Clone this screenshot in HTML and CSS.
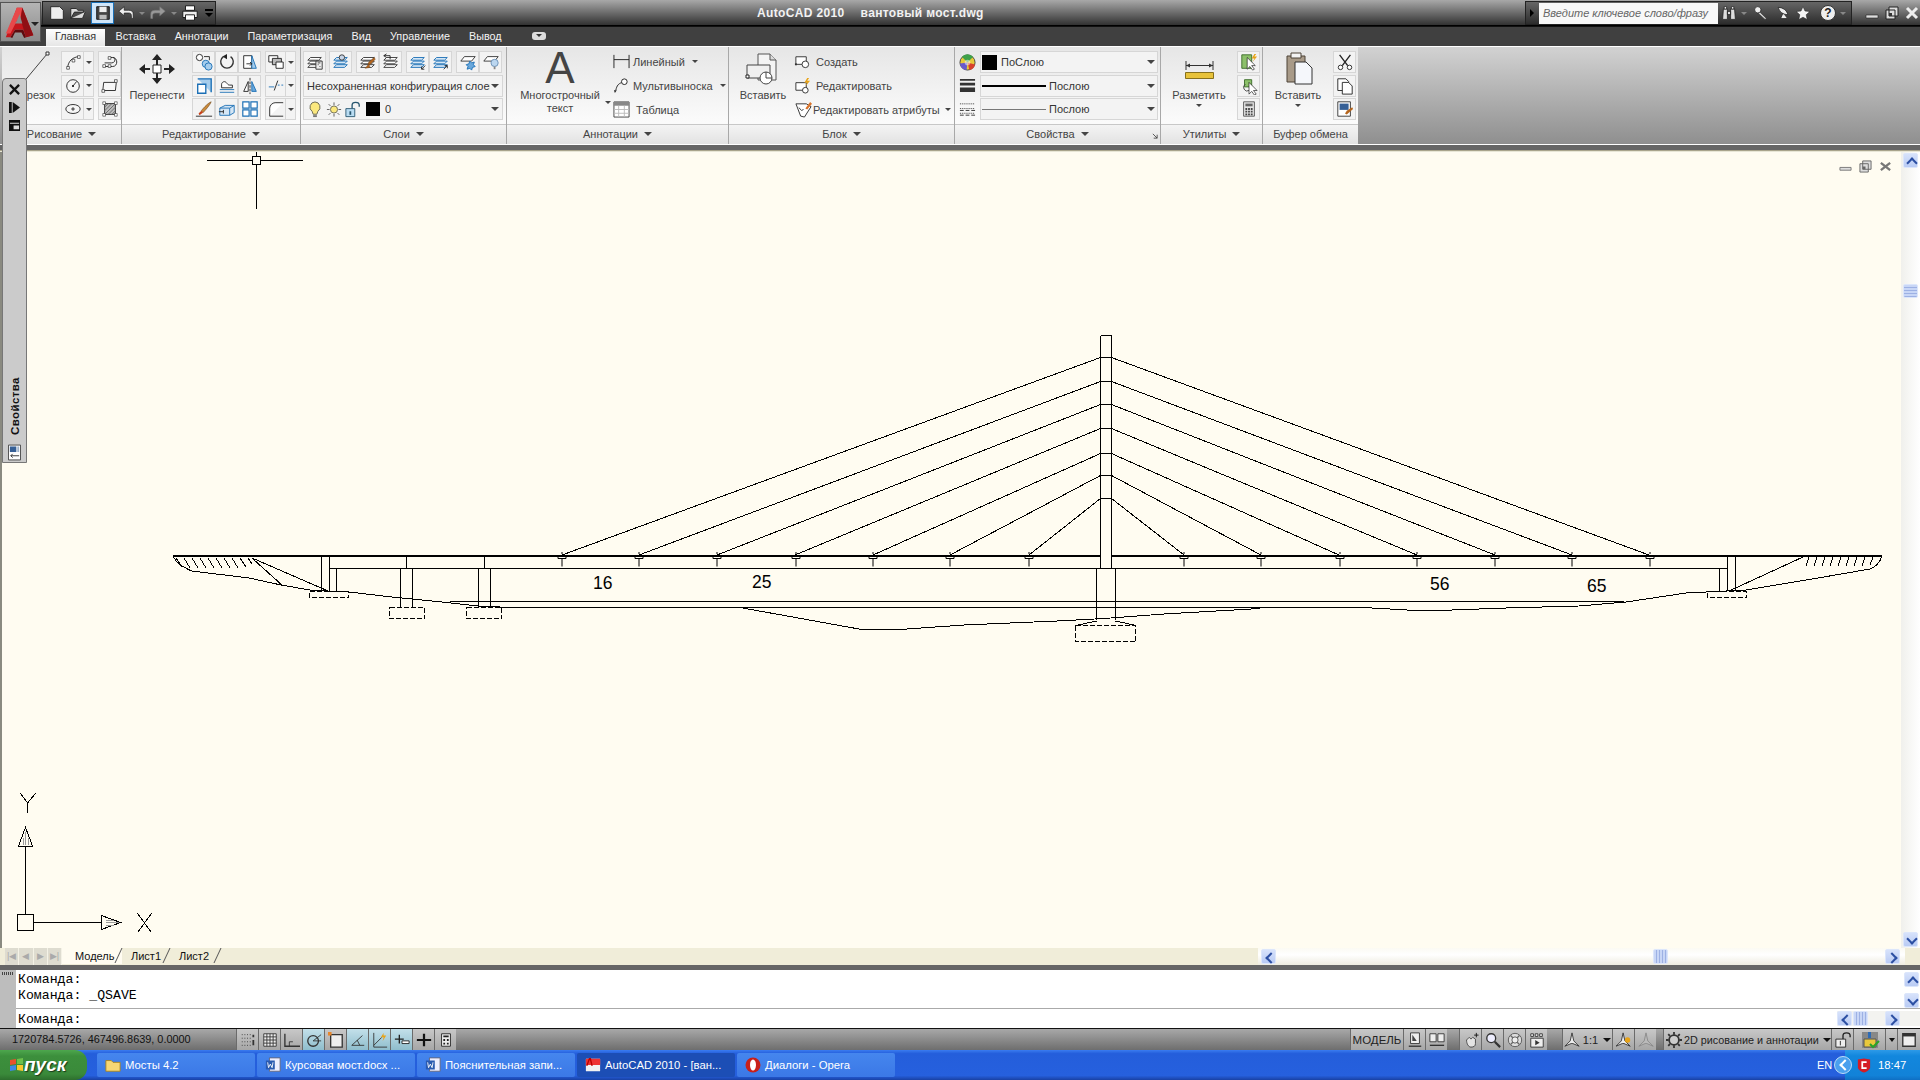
FILE: index.html
```html
<!DOCTYPE html>
<html lang="ru">
<head>
<meta charset="utf-8">
<title>AutoCAD 2010 - вантовый мост.dwg</title>
<link rel="stylesheet" href="styles.css">
</head>
<body>
<svg class="defs" width="0" height="0">
<defs>
<symbol id="layers" viewBox="0 0 20 20"><path d="M5 5h12l-3 3H2zM5 9h12l-3 3H2zM5 13h12l-3 3H2z" fill="#fff" stroke="#333"/></symbol>
<symbol id="blayers" viewBox="0 0 20 20"><path d="M5 5h12l-3 3H2zM5 9h12l-3 3H2zM5 13h12l-3 3H2z" fill="#d5e6f5" stroke="#1b6fb5"/></symbol>
<symbol id="anc" viewBox="0 0 10 16" width="10" height="16"><path d="M1 3.500h8v3H1zM5 0v2M5 6.500v8" fill="none" stroke="#000"/></symbol>
</defs>
</svg>
<div class="app">
  <div class="appbtn">
    <svg class="applogo" viewBox="0 0 36 36"><path d="M14 2h6l12 30-8 2-3-8H12l-5 8H2z" fill="#c4161c"/><path d="M14 2h6l-2 12-4 2-7 14H2z" fill="#e8484a"/><path d="M20 2l12 30-8 2-6-20z" fill="#8f0f14"/><path d="M14 16l3-7 3 10h-8z" fill="#8a8a8a"/><path d="M7 34l5-8h9l3 8-2 1-3-6h-7l-3 6z" fill="#5e0a0d"/></svg>
    <i class="appdrop"></i>
  </div>
  <header class="titlebar">
    <div class="qat">
      <svg class="q" viewBox="0 0 20 20"><path d="M3 3h10l4 4v10H3z" fill="#eee" stroke="#222"/></svg>
      <svg class="q" viewBox="0 0 20 20"><path d="M2 16V5h6l2 2h6v2H6l-4 7h13l3-7" fill="#ddd" stroke="#222"/></svg>
      <span class="qsave"><svg class="q" viewBox="0 0 20 20"><path d="M3 3h14v14H3z" fill="#444" stroke="#111"/><path d="M6 3h8v6H6z" fill="#eee"/><path d="M6 12h8v5H6z" fill="#bbb"/></svg></span>
      <svg class="q" viewBox="0 0 20 20"><path d="M8 3L2 8l6 5v-3h5c2 0 3 1 3 3v3h2v-5c0-3-2-4-5-4H8z" fill="#eee" stroke="#111" stroke-width=".7"/></svg>
      <i class="mini gray"></i>
      <svg class="q" viewBox="0 0 20 20"><path d="M12 3l6 5-6 5v-3H7c-2 0-3 1-3 3v3H2v-5c0-3 2-4 5-4h5z" fill="#999" stroke="#777" stroke-width=".7"/></svg>
      <i class="mini gray"></i>
      <svg class="q" viewBox="0 0 20 20"><path d="M5 2h10v5H5z" fill="#fff" stroke="#111"/><path d="M2 8h16v7H2z" fill="#eee" stroke="#111"/><path d="M5 12h10v6H5z" fill="#fff" stroke="#111"/></svg>
      <span class="qdrop"></span>
    </div>
    <div class="doc"><span>AutoCAD 2010</span><span>вантовый мост.dwg</span></div>
    <div class="search">
      <i class="tri-right"></i>
      <span class="searchinput">Введите ключевое слово/фразу</span>
      <svg class="q" viewBox="0 0 20 20"><path d="M3 5h5v13H2zM12 5h5l1 13h-6zM8 8h4v4H8z" fill="#ddd" stroke="#222"/><path d="M4 2h3v3H4zM13 2h3v3h-3z" fill="#fff" stroke="#222"/></svg>
      <i class="mini gray"></i>
      <svg class="q key" viewBox="0 0 20 20"><circle cx="6" cy="6" r="4" fill="#eee" stroke="#222"/><path d="M9 9l8 8-2 1-8-7" fill="#ccc" stroke="#222" stroke-width=".7"/></svg>
      <svg class="q" viewBox="0 0 20 20"><path d="M4 3c2 6 6 9 12 9-1-5-6-9-12-9zM10 10l-3 7h8" fill="#eee" stroke="#222"/></svg>
      <svg class="q star" viewBox="0 0 20 20"><path d="M10 2l2.500 5.500 6 .7-4.500 4 1.200 6-5.200-3-5.200 3 1.200-6-4.500-4 6-.7z" fill="#f4f4f4" stroke="#222" stroke-width=".7"/></svg>
      <span class="help">?</span>
      <i class="mini gray"></i>
    </div>
    <div class="winctl">
      <svg viewBox="0 0 14 14"><path d="M1 9h12v3H1z" fill="#ddd" stroke="#222" stroke-width=".6"/></svg>
      <svg viewBox="0 0 14 14"><path d="M4 1h9v9H4zM1 4h9v9H1z" fill="#ddd" stroke="#222"/><path d="M4 7h3v3H4z" fill="#333"/></svg>
      <svg viewBox="0 0 14 14"><path d="M2 2l10 10M12 2L2 12" stroke="#eee" stroke-width="3"/></svg>
    </div>
  </header>

  <nav class="tabs">
    <span class="tab active">Главная</span><span class="tab">Вставка</span><span class="tab">Аннотации</span><span class="tab">Параметризация</span><span class="tab">Вид</span><span class="tab">Управление</span><span class="tab">Вывод</span><span class="tabmore"></span>
  </nav>

  <section class="ribbon">
    <div class="panel p-draw">
      <div class="pbody">
        <div class="big bigdraw">
          <svg class="bigicon" viewBox="0 0 56 34"><path d="M18 33L43 3" stroke="#444"/><path d="M42 1h3v3h-3z" fill="#fff" stroke="#333"/></svg>
          <span class="biglabel">Отрезок</span>
        </div>
        <div class="tools t-split">
          <span class="tb s1"><svg viewBox="0 0 20 20"><path d="M4 16c1-7 5-11 12-12" fill="none" stroke="#222"/><path d="M3 15h3v3H3zM9 7h3v3H9zM15 3h3v3h-3z" fill="#fff" stroke="#222" stroke-width=".7"/></svg></span><span class="tb ar"></span>
          <span class="tb s2"><svg viewBox="0 0 20 20"><path d="M4 11h8c4 0 5-6 1-6h-3M4 15h9c6 0 6-10 0-10" fill="none" stroke="#222"/><path d="M2 13h3v3H2zM8 13h3v3H8zM8 4h3v3H8z" fill="#fff" stroke="#222" stroke-width=".7"/></svg></span>
          <span class="tb s1"><svg viewBox="0 0 20 20"><circle cx="10" cy="10" r="7" fill="#f6f6f6" stroke="#222"/><path d="M10 10l4-5" stroke="#222"/><path d="M9 9h2v2H9z" fill="#222"/></svg></span><span class="tb ar"></span>
          <span class="tb s2"><svg viewBox="0 0 20 20"><path d="M3 6h14l-1 9H2z" fill="#f6f6f6" stroke="#222"/><path d="M15 3h3v3h-3zM1 14h3v3H1z" fill="#fff" stroke="#222" stroke-width=".7"/></svg></span>
          <span class="tb s1"><svg viewBox="0 0 20 20"><ellipse cx="10" cy="10" rx="8" ry="5" fill="#f6f6f6" stroke="#222"/><path d="M8 10h4M10 8v4" stroke="#222"/></svg></span><span class="tb ar"></span>
          <span class="tb s2"><svg viewBox="0 0 20 20"><path d="M4 4h12v12H4z" fill="#bbb" stroke="#222"/><path d="M4 8l4-4M4 12l8-8M4 16L16 4M8 16l8-8M12 16l4-4" stroke="#666"/><path d="M2 2h3v3H2zM15 2h3v3h-3zM2 15h3v3H2zM15 15h3v3h-3z" fill="#fff" stroke="#222" stroke-width=".6"/></svg></span>
        </div>
      </div>
      <div class="ptitle"><span>Рисование</span><i class="mini"></i></div>
    </div>

    <div class="panel p-mod">
      <div class="pbody">
        <div class="big bigmove">
          <svg class="bigicon" viewBox="0 0 56 34"><path d="M28 3l-5 6h4v5h2V9h4zM28 33l-5-6h4v-5h2v5h4zM10 18l6-5v4h5v2h-5v4zM46 18l-6-5v4h-5v2h5v4z" fill="#222"/><path d="M24 14h8v8h-8z" fill="#fff" stroke="#222"/></svg>
          <span class="biglabel">Перенести</span>
        </div>
        <div class="tools t-3">
          <span class="tb"><svg viewBox="0 0 20 20"><circle cx="5" cy="5" r="3.500" fill="#fff" stroke="#222"/><circle cx="12" cy="12" r="4" fill="#a6cdec" stroke="#1b6fb5"/><circle cx="15" cy="15" r="4" fill="#a6cdec" stroke="#1b6fb5"/><path d="M10 4h6v4" fill="none" stroke="#222"/></svg></span>
          <span class="tb"><svg viewBox="0 0 20 20"><path d="M6 4a7 7 0 1 0 8 0" fill="none" stroke="#333" stroke-width="1.500"/><path d="M10 1v6l-5-3z" fill="#222"/></svg></span>
          <span class="tb"><svg viewBox="0 0 20 20"><path d="M3 3h9v14H3z" fill="#fff" stroke="#222"/><path d="M12 3l5 14h-5z" fill="#a6cdec" stroke="#1b6fb5"/><path d="M6 12h6M10 10l2 2-2 2" fill="none" stroke="#222"/></svg></span>
          <span class="tb"><svg viewBox="0 0 20 20"><path d="M3 2h15v15" fill="#a6cdec" stroke="#1b6fb5" stroke-width="1.500"/><path d="M3 8h9v10H3z" fill="#fff" stroke="#1b6fb5" stroke-width="1.500"/></svg></span>
          <span class="tb"><svg viewBox="0 0 20 20"><path d="M4 12V8c0-2 3-4 5-2s2 3 4 3h3v3z" fill="#fff" stroke="#222"/><path d="M2 14h16M2 17h16" stroke="#1b6fb5"/></svg></span>
          <span class="tb"><svg viewBox="0 0 20 20"><path d="M10 1v18" stroke="#222" stroke-dasharray="3 1"/><path d="M8 5v11H3z" fill="#fff" stroke="#222"/><path d="M12 5v11h5z" fill="#6aa8dc" stroke="#1b6fb5"/></svg></span>
          <span class="tb"><svg viewBox="0 0 20 20"><path d="M18 2c-3 1-8 6-11 10l2 2C12 11 17 5 18 2z" fill="#c98a3c" stroke="#6b431a" stroke-width=".6"/><path d="M7 12l-3 3 1 2 4-3z" fill="#c8401a"/><path d="M1 18h18" stroke="#222"/></svg></span>
          <span class="tb"><svg viewBox="0 0 20 20"><path d="M2 9l6-3h10v8l-5 3H2zM2 9h11v8M13 9l5-3" fill="#d5e6f5" stroke="#1b6fb5"/><path d="M1 13h5M6 11v4" stroke="#222"/></svg></span>
          <span class="tb"><svg viewBox="0 0 20 20"><path d="M2 2h7v7H2zM11 2h7v7h-7zM2 11h7v7H2zM11 11h7v7h-7z" fill="#fff" stroke="#1b6fb5" stroke-width="1.300"/></svg></span>
        </div>
        <div class="tools t-split narrow">
          <span class="tb s1"><svg viewBox="0 0 20 20"><path d="M2 3h10v7H2z" fill="#fff" stroke="#222"/><path d="M6 6h10v7H6z" fill="#bbb" stroke="#222"/><path d="M10 10h8v7h-8z" fill="#fff" stroke="#222"/></svg></span><span class="tb ar"></span>
          <span class="tb s1"><svg viewBox="0 0 20 20"><path d="M2 11h6" stroke="#1b6fb5"/><path d="M8 15l4-11" stroke="#222"/><path d="M12 9h2M16 9h2" stroke="#1b6fb5"/></svg></span><span class="tb ar"></span>
          <span class="tb s1"><svg viewBox="0 0 20 20"><path d="M3 18V9c0-3 3-6 6-6h9M3 18h15" fill="#fff" stroke="#222"/></svg></span><span class="tb ar"></span>
        </div>
      </div>
      <div class="ptitle"><span>Редактирование</span><i class="mini"></i></div>
    </div>

    <div class="panel p-lay">
      <div class="pbody col">
        <div class="layrow">
          <span class="tb"><svg viewBox="0 0 20 20"><use href="#layers"/><path d="M11 9h7v9h-7z" fill="#eee" stroke="#333"/><path d="M13 11h3M13 13h1M15 15h1" stroke="#333"/></svg></span>
          <span class="tb"><svg viewBox="0 0 20 20"><use href="#blayers"/><circle cx="11" cy="5" r="3" fill="#c9d6e8" stroke="#333"/></svg></span>
          <span class="tbgroup">
            <span class="tb"><svg viewBox="0 0 20 20"><use href="#layers"/><path d="M18 7l-6 6-2-1 1-2 6-5zM11 12l-4 5 5-1z" fill="#b5651d" stroke="#6b431a" stroke-width=".5"/></svg></span>
            <span class="tb"><svg viewBox="0 0 20 20"><use href="#layers"/><path d="M5 1L2 3l3 2M2 3h7v4" fill="none" stroke="#222"/></svg></span>
          </span>
          <span class="tbgroup">
            <span class="tb"><svg viewBox="0 0 20 20"><use href="#blayers"/><path d="M14 18l4-4M14 15v3h3" fill="none" stroke="#222"/></svg></span>
            <span class="tb"><svg viewBox="0 0 20 20"><use href="#blayers"/><path d="M13 18l4-4M14 14h3v3" fill="none" stroke="#222"/></svg></span>
          </span>
          <span class="tbgroup">
            <span class="tb"><svg viewBox="0 0 20 20"><path d="M6 4h12l-4 5H2z" fill="#fff" stroke="#333"/><path d="M12 9l2 2 3-1-1 3 2 2-3 1-1 3-2-2-3 1 1-3-2-2 3-1z" fill="#6aa8dc" stroke="#1b6fb5"/></svg></span>
            <span class="tb"><svg viewBox="0 0 20 20"><path d="M6 4h12l-4 5H2z" fill="#fff" stroke="#333"/><circle cx="14" cy="11" r="4" fill="#bcd7f0" stroke="#6a90b5"/><path d="M13 15h2v3h-2z" fill="#888"/></svg></span>
          </span>
        </div>
        <div class="combo"><span class="clip">Несохраненная конфигурация слоев</span><i class="mini"></i></div>
        <div class="combo combo2">
          <svg class="st" viewBox="0 0 16 18"><path d="M8 1a5.500 5.500 0 0 0-3 10l1 3h4l1-3A5.500 5.500 0 0 0 8 1z" fill="#fbe87e" stroke="#665"/><path d="M6 15h4v2H6z" fill="#777"/></svg>
          <svg class="st" viewBox="0 0 18 18"><circle cx="9" cy="9" r="4" fill="#fbe87e" stroke="#665"/><path d="M9 1v3M9 14v3M1 9h3M14 9h3M3 3l2 2M13 13l2 2M3 15l2-2M13 5l2-2" stroke="#555"/></svg>
          <svg class="st" viewBox="0 0 18 18"><path d="M1 8h10v9H1z" fill="#b9dcf2" stroke="#27566f"/><path d="M8 8V4c0-4 8-4 8 0v2" fill="none" stroke="#27566f" stroke-width="1.500"/><path d="M5 11h2v4H5z" fill="#27566f"/></svg>
          <span class="swatch"></span>
          <span class="zero">0</span>
          <i class="mini"></i>
        </div>
      </div>
      <div class="ptitle"><span>Слои</span><i class="mini"></i></div>
    </div>

    <div class="panel p-ann">
      <div class="pbody">
        <div class="big bigtext">
          <span class="bigA">A</span>
          <span class="biglabel">Многострочный<br>текст</span>
          <i class="mini small"></i>
        </div>
        <div class="rows">
          <div class="row"><svg class="ri" viewBox="0 0 18 18"><path d="M1 2v14M17 2v14M1 7h16" stroke="#222" fill="none"/></svg><span>Линейный</span><i class="mini small gap"></i></div>
          <div class="row"><svg class="ri" viewBox="0 0 18 18"><circle cx="12" cy="5" r="3" fill="#fff" stroke="#222"/><path d="M9 6c-3 1-5 3-6 8" fill="none" stroke="#222"/><path d="M1 14l3 0-2 3z" fill="#222"/></svg><span>Мультивыноска</span><i class="mini small gap"></i></div>
          <div class="row"><svg class="ri" viewBox="0 0 18 18"><path d="M1 1h16v16H1z" fill="#fff" stroke="#444"/><path d="M1 1h16v4H1z" fill="#888"/><path d="M1 9h16M1 13h16M6 5v12M12 5v12" stroke="#bbb"/></svg><span>&nbsp;Таблица</span></div>
        </div>
      </div>
      <div class="ptitle"><span>Аннотации</span><i class="mini"></i></div>
    </div>

    <div class="panel p-blk">
      <div class="pbody">
        <div class="big bigins">
          <svg class="bigicon" viewBox="0 0 56 34"><path d="M23 3h12l6 6v20H23z" fill="#f4f4f4" stroke="#555"/><path d="M35 3v6h6" fill="#ddd" stroke="#555"/><path d="M12 14h23v13H12z" fill="#f0f0f0" stroke="#444"/><circle cx="31" cy="27" r="6" fill="#fff" stroke="#444"/><path d="M31 21v6h6" fill="none" stroke="#444"/><path d="M11 24h3v3h-3z" fill="#fff" stroke="#222"/></svg>
          <span class="biglabel">Вставить</span>
        </div>
        <div class="rows rowsb">
          <div class="row"><svg class="ri" viewBox="0 0 18 18"><path d="M2 4h11v8H2z" fill="#fff" stroke="#333"/><circle cx="12" cy="12" r="3.500" fill="#fff" stroke="#333"/><path d="M1 11h2v2H1z" fill="#333"/></svg><span>Создать</span></div>
          <div class="row"><svg class="ri" viewBox="0 0 18 18"><path d="M2 6h11v8H2z" fill="#fff" stroke="#333"/><circle cx="12" cy="14" r="3" fill="#fff" stroke="#333"/><path d="M14 1l-3 5h3l-2 4 5-6h-3l2-3z" fill="#e8a317"/></svg><span>Редактировать</span></div>
          <div class="row tight"><svg class="ri" viewBox="0 0 18 18"><path d="M1 3h11l5 3-7 11-4-1z" fill="#fff" stroke="#333"/><path d="M4 7l3 3 2-1" fill="none" stroke="#333"/><path d="M16 1l-5 7 2 1 5-6z" fill="#d9732b"/></svg><span>Редактировать атрибуты</span><i class="mini small gap2"></i></div>
        </div>
      </div>
      <div class="ptitle"><span>Блок</span><i class="mini"></i></div>
    </div>

    <div class="panel p-prop">
      <div class="pbody col">
        <div class="proprow">
          <svg class="pi" viewBox="0 0 18 18"><circle cx="9" cy="9" r="8" fill="#e8c93a" stroke="#444"/><path d="M9 9L3 3A8 8 0 0 1 15 3z" fill="#3fa14a"/><path d="M9 9l8 2a8 8 0 0 1-6 6z" fill="#d8402c"/><path d="M9 9l-1 8a8 8 0 0 1-7-7z" fill="#6a5acd"/><circle cx="9" cy="9" r="3" fill="#fff" opacity=".5"/></svg>
          <div class="combo pc"><span class="swatch2"></span><span>ПоСлою</span><i class="mini push"></i></div>
        </div>
        <div class="proprow">
          <svg class="pi" viewBox="0 0 18 18"><path d="M1 2h16v2H1zM1 6h16v3H1zM1 11h16v5H1z" fill="#333"/></svg>
          <div class="combo pc"><span class="lw thick"></span><span>Послою</span><i class="mini push"></i></div>
        </div>
        <div class="proprow">
          <svg class="pi" viewBox="0 0 18 18"><path d="M1 3h16M1 8h16M1 13h16" stroke="#333" stroke-dasharray="1 1"/><path d="M1 10h16M1 15h16" stroke="#333" stroke-dasharray="4 2"/></svg>
          <div class="combo pc"><span class="lw thin"></span><span>Послою</span><i class="mini push"></i></div>
        </div>
      </div>
      <div class="ptitle"><span>Свойства</span><i class="mini"></i><svg class="launch" viewBox="0 0 7 7"><path d="M1 1l5 5M6 2v4H2" fill="none" stroke="#444"/></svg></div>
    </div>

    <div class="panel p-util">
      <div class="pbody">
        <div class="big bigmeas">
          <svg class="bigicon" viewBox="0 0 50 34"><path d="M12 10v9M39 10v9M12 14.500h27" stroke="#333" fill="none"/><path d="M12 14.500l4-2v4zM39 14.500l-4-2v4z" fill="#333"/><path d="M11.500 21.500h28v6h-28z" fill="#e7c23a" stroke="#86701c"/></svg>
          <span class="biglabel">Разметить</span>
          <i class="mini small"></i>
        </div>
        <div class="tools t-1">
          <span class="tb"><svg viewBox="0 0 20 20"><path d="M2 2h11v15H2z" fill="#8cc06a" stroke="#3a6b28"/><path d="M8 5v13l3-3 3 4 2-1-3-4h4z" fill="#fff" stroke="#111" stroke-width=".7"/><path d="M16 1l-3 5h3l-2 4 5-6h-3l2-3z" fill="#e8a317"/></svg></span>
          <span class="tb"><svg viewBox="0 0 20 20"><path d="M5 3h8v8H5z" fill="#8cc06a" stroke="#3a6b28"/><path d="M6 8a4 4 0 1 0 4 7" fill="none" stroke="#444"/><path d="M10 6v13l3-3 3 4 2-1-3-4h4z" fill="#fff" stroke="#111" stroke-width=".7"/></svg></span>
          <span class="tb"><svg viewBox="0 0 20 20"><path d="M4 2h12v16H4z" fill="#e6e6e6" stroke="#555"/><path d="M6 4h8v3H6z" fill="#666"/><path d="M6 9h2v2H6zM9 9h2v2H9zM12 9h2v2h-2zM6 12h2v2H6zM9 12h2v2H9zM12 12h2v2h-2zM6 15h2v2H6zM9 15h2v2H9zM12 15h2v2h-2z" fill="#444"/></svg></span>
        </div>
      </div>
      <div class="ptitle"><span>Утилиты</span><i class="mini"></i></div>
    </div>

    <div class="panel p-buf">
      <div class="pbody">
        <div class="big bigpaste">
          <svg class="bigicon" viewBox="0 0 50 34"><path d="M14 5h18v26H14z" fill="#a89a88" stroke="#4d4336"/><path d="M18 2h10v5H18z" fill="#f4f4f4" stroke="#4d4336"/><path d="M22 11h11l6 6v16H22z" fill="#f5f7fb" stroke="#333"/></svg>
          <span class="biglabel">Вставить</span>
          <i class="mini small"></i>
        </div>
        <div class="tools t-1">
          <span class="tb"><svg viewBox="0 0 20 20"><path d="M4 2l9 12M16 2L7 14" stroke="#222" stroke-width="1.500"/><circle cx="5" cy="16" r="2.500" fill="#fff" stroke="#222"/><circle cx="15" cy="16" r="2.500" fill="#fff" stroke="#222"/></svg></span>
          <span class="tb"><svg viewBox="0 0 20 20"><path d="M2 2h9l3 3v10H2z" fill="#fff" stroke="#222"/><path d="M7 6h7l4 4v9H7z" fill="#fff" stroke="#222"/></svg></span>
          <span class="tb"><svg viewBox="0 0 20 20"><path d="M2 2h14v16H2z" fill="#fff" stroke="#333"/><path d="M4 4h10v7H4z" fill="#355f96"/><path d="M19 10l-7 6-2-1 2-3 6-4z" fill="#b5651d"/></svg></span>
        </div>
      </div>
      <div class="ptitle"><span>Буфер обмена</span></div>
    </div>
  </section>
  <div class="splitter"></div>

  <main class="work">
    <div class="drawing">
      <svg class="bridge" viewBox="0 152 1901 796" width="1901" height="796">
        <g fill="none" stroke="#000" shape-rendering="crispEdges">
          <path d="M207 160.500H252M260 160.500H303M256.500 152V156M256.500 165V209"/>
          <path d="M252.500 156.500h8v8h-8z"/>
          <path d="M173 556H1100M1112 556H1882" stroke-width="2"/>
          <path d="M329.500 568.500H1727.500"/>
          <path d="M450 601.500H1624M510 607.500H1363"/>
          <path d="M1100.500 335.500H1111.500V568M1100.500 335.500V568"/>
          <path d="M1100.500 357.500h11M1100.500 381.500h11M1100.500 404.500h11M1100.500 428.500h11M1100.500 453.500h11M1100.500 475.500h11M1100.500 498.500h11"/>
          <path d="M1096.500 568.500V620M1115.500 568.500V620"/>
          <path d="M1100.500 357.500L562 555M1100.500 381.500L639 555M1100.500 404.500L717 555M1100.500 428.500L795 555M1100.500 453.500L873 555M1100.500 475.500L950 555M1100.500 498.500L1029 555"/>
          <path d="M1111.500 357.500L1649 555M1111.500 381.500L1572 555M1111.500 404.500L1495 555M1111.500 428.500L1417 555M1111.500 453.500L1339 555M1111.500 475.500L1261 555M1111.500 498.500L1184 555"/>
          <path d="M321.500 556V591M329.500 556V591M336.500 568V591M406.500 556V568M484.500 556V568M400.500 568V607M412.500 568V607M478.500 568V607M490.500 568V607"/>
          <path d="M309.500 591.500h39v6h-39zM389.500 607.500h35v11h-35zM466.500 607.500h35v11h-35zM1075.500 625.500h60v16h-60z" stroke-dasharray="5 2"/>
          <path d="M1078 625L1096.500 621M1115.500 621L1134 625"/>
          <path d="M1719.500 568V591M1727.500 556V591M1735.500 556V591"/>
          <path d="M1707.500 591.500h39v6h-39z" stroke-dasharray="5 2"/>
          <path d="M173 556C176 562 180 566 186 568C190 571 195 572 200 572L249 578L281 585L310 590L328 591L349 592L392 597L442 602L478 606L510 607.500"/>
          <path d="M740 607.500L859 629H907L964 625L1057 621L1104 618.500L1164 614L1260 608.500"/>
          <path d="M1882 556C1880 562 1876 567 1870 569L1818 578L1746 590L1686 593L1626 602L1579 606L1506 608L1425 611L1363 607.500"/>
          <path d="M252 558L328 591M253 559L283 586M1729 591L1803 557"/>
          <path d="M176 558l6 9M184 558l6 10M192 558l6 10M200 558l6 10M208 558l6 10M216 558l6 10M224 558l6 10M232 558l6 10M240 558l6 9M248 558l4 6"/>
          <path d="M1809 557l-3 9M1817 557l-3 9M1825 557l-3 9M1833 557l-3 9M1841 557l-3 9M1849 557l-3 9M1857 557l-3 9M1865 557l-3 9M1873 557l-3 8"/>
          <path d="M20.500 793.500L27.500 803L35.500 793.500M27.500 803V813"/>
          <path d="M25.500 846V914.500M33.500 922.500H101"/>
          <path d="M17.500 914.500h16v16h-16z"/>
          <path d="M25.500 827.500L18.500 846H32.500z"/>
          <path d="M101.500 915.500L120.500 922.500L101.500 929.500z"/>
          <path d="M25 832V845M23 838V845M28 838V845M106 922H119M106 920H114M106 925H114" stroke="#999"/>
          <path d="M137.500 913.500L151.500 932.500M151.500 913.500L137.500 932.500"/>
        </g>
        <g>
          <use href="#anc" x="557" y="552"/><use href="#anc" x="634" y="552"/><use href="#anc" x="712" y="552"/><use href="#anc" x="791" y="552"/><use href="#anc" x="868" y="552"/><use href="#anc" x="945" y="552"/><use href="#anc" x="1024" y="552"/><use href="#anc" x="1179" y="552"/><use href="#anc" x="1256" y="552"/><use href="#anc" x="1335" y="552"/><use href="#anc" x="1412" y="552"/><use href="#anc" x="1490" y="552"/><use href="#anc" x="1567" y="552"/><use href="#anc" x="1645" y="552"/>
        </g>
        <g class="dim">
          <text x="593" y="589">16</text>
          <text x="752" y="588">25</text>
          <text x="1430" y="590">56</text>
          <text x="1587" y="592">65</text>
        </g>
      </svg>
      <div class="viewctl">
        <svg viewBox="0 0 14 14"><path d="M1 8h12v3H1z" fill="#ddd" stroke="#777"/></svg>
        <svg viewBox="0 0 14 14"><path d="M4 1h9v9H4zM1 4h9v9H1z" fill="#ddd" stroke="#666"/><path d="M4 7h3v3H4z" fill="#666"/></svg>
        <svg viewBox="0 0 14 14"><path d="M2 3l10 8M12 3L2 11" stroke="#777" stroke-width="2.500"/></svg>
      </div>
      <aside class="palette">
        <svg class="pal-x" viewBox="0 0 12 12"><path d="M1 1l10 10M11 1L1 11" stroke="#111" stroke-width="2.500"/></svg>
        <svg class="pal-i" viewBox="0 0 12 12"><path d="M0 0h3v12H0z" fill="#111"/><path d="M4 0l8 6-8 6z" fill="#111"/></svg>
        <svg class="pal-i" viewBox="0 0 12 12"><path d="M0 0h12v12H0z" fill="#111"/><path d="M1 3h10v1H1zM5 6h6v4H5z" fill="#ddd"/></svg>
        <span class="pal-title">Свойства</span>
        <svg class="pal-tool" viewBox="0 0 14 17"><path d="M.5.5h13v16H.5z" fill="#fff" stroke="#444"/><path d="M2 2h7v6H2z" fill="#355f96"/><path d="M10 2h2v6h-2z" fill="#9db2cc"/><path d="M3 12h9M3 12l2-2M3 12l2 2" fill="none" stroke="#333"/></svg>
      </aside>
    </div>
    <div class="vscroll">
      <span class="sb up"></span>
      <span class="sthumb v"></span>
      <span class="grow"></span>
      <span class="sb down"></span>
    </div>
  </main>

  <div class="layoutbar">
    <div class="navs"><span class="nv">|◀</span><span class="nv">◀</span><span class="nv">▶</span><span class="nv">▶|</span></div>
    <span class="ltab lcur">Модель</span><span class="ltab l1">Лист1</span><span class="ltab l2">Лист2</span>
    <span class="grow"></span>
    <div class="hscroll">
      <span class="sb left"></span><span class="sthumb h"></span><span class="grow"></span><span class="sb right"></span>
    </div>
    <span class="corner"></span>
  </div>
  <div class="splitter2"></div>

  <section class="command">
    <div class="grip"><i></i></div>
    <div class="cmdmain">
      <div class="hist">
        <div class="histtext">Команда:<br>Команда: _QSAVE</div>
        <div class="cmdv"><span class="sb up"></span><span class="sb down"></span></div>
      </div>
      <div class="prompt">
        <span>Команда:</span>
        <div class="cmdh"><span class="sb left"></span><span class="sthumb h2"></span><span class="grow"></span><span class="sb right"></span></div>
      </div>
    </div>
  </section>

  <footer class="status">
    <span class="coords">1720784.5726, 467496.8639, 0.0000</span>
    <div class="sgroup">
      <span class="sbtn"><svg viewBox="0 0 18 18"><path d="M2 3h10M2 7h10M2 11h10M2 15h10" stroke="#333" stroke-dasharray="1 2"/><path d="M15 3v3M15 9v6" stroke="#333" stroke-width="2"/></svg></span>
      <span class="sbtn"><svg viewBox="0 0 18 18"><path d="M2 2h14v14H2zM2 5.500h14M2 9h14M2 12.500h14M5.500 2v14M9 2v14M12.500 2v14" fill="#eee" stroke="#333"/></svg></span>
      <span class="sbtn"><svg viewBox="0 0 18 18"><path d="M1 2v14h17" fill="none" stroke="#333" stroke-width="1.500"/><path d="M6 16v-5h4" fill="none" stroke="#333"/></svg></span>
      <span class="sbtn on"><svg viewBox="0 0 18 18"><circle cx="8" cy="10" r="6" fill="none" stroke="#333" stroke-width="1.500"/><path d="M8 10l9-7M8 10h9" stroke="#333"/></svg></span>
      <span class="sbtn"><svg viewBox="0 0 18 18"><path d="M3 3h13v14H3z" fill="#eee" stroke="#333" stroke-width="1.500"/><path d="M0 0h4v4H0z" fill="#e8872b"/></svg></span>
      <span class="sbtn on"><svg viewBox="0 0 18 18"><path d="M2 15L14 4M2 15h14M8 9l3 6" fill="none" stroke="#333"/></svg></span>
      <span class="sbtn on"><svg viewBox="0 0 18 18"><path d="M2 1v16h15M2 15L11 6" fill="none" stroke="#333"/><path d="M13 1l-3 5h3l-1 4 4-6h-3z" fill="#e8a317"/></svg></span>
      <span class="sbtn on"><svg viewBox="0 0 18 18"><path d="M6 3v10M1 8h10" stroke="#222" stroke-width="1.500"/><path d="M9 10h8v3H9z" fill="#fff" stroke="#222"/></svg></span>
      <span class="sbtn"><svg viewBox="0 0 18 18"><path d="M9 2v14M1 9h16" stroke="#111" stroke-width="2.500"/></svg></span>
      <span class="sbtn"><svg viewBox="0 0 18 18"><path d="M4 2h10v14H4z" fill="#eee" stroke="#222"/><path d="M6 4h6v2H6zM6 8h2v2H6zM10 8h2v2h-2zM6 12h2v2H6zM10 12h2v2h-2z" fill="#222"/></svg></span>
    </div>
    <span class="grow"></span>
    <span class="sbtn model">МОДЕЛЬ</span>
    <span class="sbtn w22"><svg viewBox="0 0 18 18"><path d="M4 1h10v12H4z" fill="#eee" stroke="#333"/><path d="M6 3v7h5z" fill="#444"/><path d="M2 16h14" stroke="#333" stroke-width="1.500"/></svg></span>
    <span class="sbtn w22"><svg viewBox="0 0 18 18"><path d="M1 2h7v9H1zM10 2h7v9h-7z" fill="#eee" stroke="#333"/><path d="M1 15h16" stroke="#333" stroke-width="1.500"/></svg></span>
    <span class="gap12"></span>
    <span class="sbtn w22"><svg viewBox="0 0 18 18"><path d="M4 9l3-3 2 2 2-2 3 2v5c0 3-2 4-5 4S4 13 4 9z" fill="#e4e4e4" stroke="#444"/><path d="M15 1v5M12.500 3.500h5" stroke="#111"/></svg></span>
    <span class="sbtn w22"><svg viewBox="0 0 18 18"><circle cx="7" cy="7" r="5" fill="#eef" stroke="#333" stroke-width="1.500"/><path d="M11 11l6 6" stroke="#333" stroke-width="2.500"/></svg></span>
    <span class="sbtn w22"><svg viewBox="0 0 18 18"><circle cx="9" cy="9" r="7.500" fill="#ddd" stroke="#555"/><path d="M4 4l10 10M14 4L4 14" stroke="#666" stroke-width="1.500"/><circle cx="9" cy="9" r="3.500" fill="#eee" stroke="#555"/></svg></span>
    <span class="sbtn w22"><svg viewBox="0 0 18 18"><path d="M2 2h3v3H2zM7 2h3v3H7zM12 2h3v3h-3z" fill="#eee" stroke="#333"/><path d="M2 7h14v10H2z" fill="#eee" stroke="#333"/><path d="M7 9l5 3-5 3z" fill="#333"/></svg></span>
    <span class="gap15"></span>
    <span class="sbtn scale"><svg viewBox="0 0 18 18"><path d="M9 1l2 9 6 6-7-3-2 0-7 3 6-6z" fill="#eee" stroke="#333"/></svg><span>1:1</span><i class="mini"></i></span>
    <span class="sbtn w22"><svg viewBox="0 0 18 18"><path d="M8 1l2 9 6 6-7-3-2 0-7 3 6-6z" fill="#eee" stroke="#333"/><circle cx="13" cy="9" r="3" fill="#e8a317"/></svg></span>
    <span class="sbtn w22"><svg viewBox="0 0 18 18"><path d="M9 1l2 9 6 6-7-3-2 0-7 3 6-6z" fill="#bbb" stroke="#888"/></svg></span>
    <span class="gap8"></span>
    <span class="sbtn work2d"><svg viewBox="0 0 18 18"><circle cx="9" cy="9" r="5.500" fill="#ccc" stroke="#333" stroke-width="2"/><path d="M9 0v3M9 15v3M0 9h3M15 9h3M2.500 2.500l2 2M13.500 13.500l2 2M2.500 15.500l2-2M13.500 4.500l2-2" stroke="#333" stroke-width="2"/></svg><span>2D рисование и аннотации</span><i class="mini"></i></span>
    <span class="sbtn w22"><svg viewBox="0 0 18 18"><path d="M1 8h11v9H1z" fill="#eee" stroke="#222"/><path d="M9 8V4c0-4 8-4 8 0v2" fill="none" stroke="#222" stroke-width="1.500"/><path d="M6 10v5" stroke="#222"/></svg></span>
    <span class="sbtn trayic"><svg viewBox="0 0 22 20"><path d="M3 2h16v16H3z" fill="#888"/><path d="M5 9h12v8H5z" fill="#e9c83c" stroke="#555"/><path d="M9 2h3v6H9z" fill="#2d6bb5"/><path d="M11 14l3 3 6-6" fill="none" stroke="#29a329" stroke-width="2"/></svg></span>
    <span class="sbtn w12"><i class="mini"></i></span>
    <span class="sbtn lastbtn"><svg viewBox="0 0 18 18"><path d="M2 2h14v14H2z" fill="#eee" stroke="#333" stroke-width="1.500"/><path d="M2 2h14v3H2z" fill="#333"/></svg></span>
  </footer>

  <footer class="taskbar">
    <div class="start"><svg viewBox="0 0 16 16"><path d="M1 3l6-1v5l-6 1z" fill="#e8512c"/><path d="M8 2l6-1v6l-6 0z" fill="#6cc04a"/><path d="M1 9l6-1v5l-6 1z" fill="#3f88e6"/><path d="M8 8h6v6l-6-1z" fill="#f7c92c"/></svg><span>пуск</span></div>
    <div class="tasks">
      <span class="task"><svg viewBox="0 0 18 16"><path d="M1 3h6l2 2h8v10H1z" fill="#f7d774" stroke="#a8821c"/></svg><span>Мосты 4.2</span></span>
      <span class="task"><svg viewBox="0 0 18 18"><path d="M5 1h12v15H5z" fill="#eef" stroke="#667"/><path d="M1 4h10v10H1z" fill="#2a5ab0"/><path d="M3 6l1 6 2-4 2 4 1-6" fill="none" stroke="#fff"/></svg><span>Курсовая мост.docx ...</span></span>
      <span class="task"><svg viewBox="0 0 18 18"><path d="M5 1h12v15H5z" fill="#eef" stroke="#667"/><path d="M1 4h10v10H1z" fill="#2a5ab0"/><path d="M3 6l1 6 2-4 2 4 1-6" fill="none" stroke="#fff"/></svg><span>Пояснительная запи...</span></span>
      <span class="task cur"><svg viewBox="0 0 18 16"><path d="M1 1h16v14H1z" fill="#f2f2f2"/><path d="M1 1h16v7H1z" fill="#e33"/><path d="M2 9l3-8h1l2 8" fill="none" stroke="#b00" stroke-width="1.500"/><path d="M10 3h7v4h-7z" fill="#e33"/></svg><span>AutoCAD 2010 - [ван...</span></span>
      <span class="task"><svg viewBox="0 0 16 16"><circle cx="8" cy="8" r="7.500" fill="#c8201a"/><ellipse cx="8" cy="8" rx="3" ry="5.500" fill="#fff"/></svg><span>Диалоги - Opera</span></span>
    </div>
    <span class="grow"></span>
    <span class="lang">EN</span>
    <span class="chev"></span>
    <div class="tray">
      <svg viewBox="0 0 16 18"><path d="M1 2l7-1 7 1v9c0 3-4 5-7 6-3-1-7-3-7-6z" fill="#d51c24"/><path d="M11 5H6v7h5" fill="none" stroke="#fff" stroke-width="2"/></svg>
      <span>18:47</span>
    </div>
  </footer>
</div>
</body>
</html>
```
FILE: styles.css
```css
* { box-sizing: border-box; }
html, body { margin: 0; padding: 0; }
body { width: 1920px; height: 1080px; overflow: hidden; font-family: "Liberation Sans", "Noto Sans", sans-serif; font-size: 11px; color: #333; background: #888; }
.defs { position: absolute; }
.app { width: 1920px; height: 1080px; display: flex; flex-direction: column; position: relative; }
.grow { flex: 1; }
svg { display: block; flex: none; }

/* mini arrow */
.mini { display: inline-block; flex: none; width: 0; height: 0; border-left: 4px solid transparent; border-right: 4px solid transparent; border-top: 4px solid #444; margin-left: 6px; }
.mini.small { border-left-width: 3px; border-right-width: 3px; border-top-width: 3px; }
.mini.gray { border-left-width: 3px; border-right-width: 3px; border-top-width: 3px; border-top-color: #888; margin: 0 4px; }
.qat .mini.gray { margin: 0 1px; }
.push { margin-left: auto; }

/* application button */
.appbtn { position: absolute; left: 0; top: 2px; width: 41px; height: 40px; z-index: 3; padding: 2px 0 0 3px; background: linear-gradient(#b4b4b4, #8c8c8c); border: 1px solid #555; }
.applogo { width: 33px; height: 35px; }
.appdrop { position: absolute; right: 1px; top: 19px; border: 4px solid transparent; border-top-color: #222; }

/* title bar */
.titlebar { height: 27px; flex: none; display: flex; align-items: center; position: relative; padding-left: 42px; background: linear-gradient(#a8a8a8, #777 40%, #333 95%, #000 96%); border-bottom: 1px solid #111; }
.qat { width: 174px; height: 24px; display: flex; align-items: center; background: linear-gradient(#666, #333); border: 1px solid #222; padding-left: 5px; gap: 3px; }
.q { width: 18px; height: 18px; }
.qsave { width: 23px; height: 22px; margin-left: 1px; display: flex; align-items: center; justify-content: center; background: #cfe6fa; border: 1px solid #1b6fb5; }
.qdrop { width: 8px; height: 8px; margin-left: 3px; border-top: 2px solid #000; position: relative; }
.qdrop::after { content: ""; position: absolute; top: 2px; left: 0; border: 4px solid transparent; border-top-color: #000; }
.doc { position: absolute; left: 757px; top: 5px; display: flex; gap: 16px; color: #f2f2f2; font: bold 12px/16px "Liberation Sans", sans-serif; letter-spacing: .35px; }
.search { position: absolute; left: 1525px; top: 1px; width: 327px; height: 24px; display: flex; align-items: center; background: linear-gradient(#666, #2c2c2c); border: 1px solid #222; }
.search .q { width: 16px; height: 16px; }
.tri-right { width: 0; height: 0; margin: 0 5px 0 4px; border-top: 4px solid transparent; border-bottom: 4px solid transparent; border-left: 4px solid #000; }
.searchinput { flex: none; width: 179px; height: 21px; margin-right: 3px; padding-left: 4px; background: #f8f8f8; color: #666; font: italic 11px/21px "Liberation Sans", sans-serif; white-space: nowrap; overflow: hidden; }
.search .key { margin: 0 2px 0 2px; }
.search .q + .q { margin-left: 4px; }
.search .star { margin-right: 1px; }
.help { width: 16px; height: 16px; margin-left: 8px; border-radius: 50%; background: #eee; border: 1px solid #333; color: #222; font: bold 12px/14px "Liberation Sans", sans-serif; text-align: center; }
.winctl { position: absolute; right: 1px; top: 6px; display: flex; gap: 6px; }
.winctl svg { width: 14px; height: 14px; }

/* tabs */
.tabs { height: 19px; flex: none; display: flex; align-items: flex-end; padding-left: 46px; background: #404040; }
.tab { height: 17px; padding: 0 9.500px; margin-right: 1px; color: #f4f4f4; font-size: 10.800px; line-height: 15px; white-space: nowrap; }
.tab + .tab { margin-right: 0; }
.tab.active { width: 59px; margin-right: 1px; padding: 0; text-align: center; color: #333; background: linear-gradient(#fff, #e6e6e6); }
.tabmore { width: 14px; height: 8px; margin: 0 0 6px 21px; background: #ddd; border-radius: 3px; position: relative; }
.tabmore::after { content: ""; position: absolute; left: 4px; top: 2px; border: 3px solid transparent; border-top-color: #333; }

/* ribbon */
.ribbon { height: 99px; flex: none; display: flex; padding-left: 2px; border-top: 1px solid #fff; border-bottom: 1px solid #fff; background: linear-gradient(#d2d2d2, #8f8f8f); }
.panel { flex: none; display: flex; flex-direction: column; border-right: 1px solid #a8a8a8; background: linear-gradient(#e6e6e6, #fbfbfb 78%); }
.p-draw { width: 120px; }
.p-mod { width: 179px; }
.p-lay { width: 206px; }
.p-ann { width: 222px; }
.p-blk { width: 226px; }
.p-prop { width: 206px; }
.p-util { width: 102px; }
.p-buf { width: 95px; border-right: 0; }
.pbody { height: 77px; display: flex; padding-top: 4px; }
.pbody.col { flex-direction: column; gap: 1.500px; }
.ptitle { height: 20px; padding-bottom: 2px; display: flex; align-items: center; justify-content: center; position: relative; background: linear-gradient(#f4f4f4, #e2e2e2); border-top: 1px solid #c8c8c8; color: #444; font-size: 11px; }
.launch { position: absolute; right: 2px; bottom: 5px; width: 6px; height: 6px; }
.big { display: flex; flex-direction: column; align-items: center; position: relative; line-height: 13px; color: #444; font-size: 11px; flex: none; text-align: center; }
.bigicon { height: 34px; width: 56px; margin-bottom: 4px; }
.biglabel { display: block; white-space: nowrap; }
.bigdraw { width: 59px; }
.bigdraw .biglabel { padding-left: 5px; }
.bigmove { width: 70px; }
.bigtext { width: 106px; }
.bigA { font: 44px/34px "Liberation Sans", sans-serif; color: #444; margin-bottom: 4px; height: 34px; }
.bigtext .mini { position: absolute; right: 2px; top: 50px; }
.bigins { width: 68px; margin-left: 0; }
.bigmeas { width: 76px; }
.bigpaste { width: 70px; }
.bigmeas .mini, .bigpaste .mini { margin: 2px 0 0; }
.tools { display: grid; grid-auto-rows: 22px; row-gap: 1.500px; }
.t-split { grid-template-columns: 23px 10px; column-gap: 0; margin-right: 3px; }
.p-draw .tools { grid-template-columns: 23px 10px 4px 23px; }
.p-draw .tb.ar { grid-column: 2; }
.p-draw .s2 { grid-column: 4; }
.t-3 { grid-template-columns: repeat(3, 23px); margin-right: 4px; }
.t-1 { grid-template-columns: 23px; }
.narrow { grid-template-columns: 21px 10px; }
.tb { display: flex; align-items: center; justify-content: center; background: #f3f3f3; border: 1px solid #d6d6d6; height: 22px; }
.tb svg { width: 18px; height: 18px; }
.tb.ar { position: relative; border-left: 0; }
.tb.ar::after { content: ""; border: 3px solid transparent; border-top-color: #444; margin-top: 3px; }

.p-lay .pbody { padding-left: 2px; }
.layrow { display: flex; height: 22px; gap: 3px; }
.tbgroup { display: flex; margin-left: 1px; }
.layrow > .tb, .tbgroup .tb { width: 23px; }
.combo { display: flex; align-items: center; width: 200px; height: 22px; padding: 0 3px 0 3px; background: #f3f3f3; border: 1px solid #d6d6d6; font-size: 11px; white-space: nowrap; color: #333; }
.clip { width: 183px; overflow: hidden; }
.combo .mini { margin-left: auto; }
.combo2 { gap: 3px; padding-left: 3px; }
.st { width: 16px; height: 17px; }
.swatch { width: 14px; height: 14px; margin-left: 2px; background: #000; }
.zero { margin-left: 2px; }

.rows { display: flex; flex-direction: column; gap: 5px; margin-top: 1px; }
.row { display: flex; align-items: center; height: 19px; font-size: 11px; white-space: nowrap; color: #444; gap: 3px; }
.ri { width: 17px; height: 17px; }
.gap { margin-left: 4px; }
.rowsb { margin-left: -3px; }
.rowsb .row { gap: 5px; }
.rowsb .tight { gap: 1px; margin-left: 1px; }
.gap2 { margin-left: 4px; }

.proprow { display: flex; align-items: center; height: 22px; padding-left: 4px; gap: 4px; }
.pi { width: 17px; height: 17px; }
.pc { width: 178px; gap: 2px; padding: 0 2px 0 1px; }
.swatch2 { width: 15px; height: 15px; background: #000; margin-right: 2px; }
.lw { width: 64px; margin-right: 1px; }
.thick { border-top: 2px solid #000; }
.thin { border-top: 1px solid #777; }

/* band */
.splitter { height: 7px; flex: none; background: linear-gradient(#666 70%, #a9a48c 70%, #a9a48c 85%, #e8e6d6 85%); }

/* work */
.work { height: 796px; flex: none; display: flex; background: #fffcf1; }
.drawing { flex: 1; position: relative; overflow: visible; }
.drawing::before { content: ""; position: absolute; left: 0; top: 0; bottom: 0; width: 2px; background: #8a8a80; }
.bridge { display: block; }
.dim text { font: 17.500px "Liberation Sans", sans-serif; fill: #000; }
.viewctl { position: absolute; right: 9px; top: 8px; display: flex; gap: 7px; }
.viewctl svg { width: 13px; height: 13px; }
.palette { position: absolute; left: 2px; top: -74px; width: 25px; height: 385px; display: flex; flex-direction: column; align-items: center; background: #cbcbcb; border: 1px solid #777; border-top-left-radius: 4px; border-top-right-radius: 3px; padding-top: 5px; }
.pal-x { width: 11px; height: 11px; margin-bottom: 7px; }
.pal-i { width: 11px; height: 11px; margin-bottom: 7px; }
.pal-title { margin-top: 241px; writing-mode: vertical-rl; transform: rotate(180deg); font: bold 11.500px/14px "Liberation Sans", sans-serif; letter-spacing: .4px; color: #111; height: 56px; white-space: nowrap; }
.pal-tool { width: 13px; height: 17px; margin-top: 9px; }

/* scrollbars */
.vscroll { width: 19px; display: flex; flex-direction: column; padding: 1px 2px; background: linear-gradient(90deg, #f0f0ec, #fff); }
.sb { display: block; width: 15px; height: 15px; flex: none; background: linear-gradient(#d7e2fb, #b9cbf4); border: 1px solid #dce6fb; border-radius: 2px; position: relative; }
.sb::after { content: ""; position: absolute; left: 4px; top: 4px; width: 6px; height: 6px; border: solid #2c4fa3; border-width: 2px 0 0 2px; }
.sb.up::after { transform: translateY(1px) rotate(45deg); }
.sb.down::after { transform: translateY(-2px) rotate(225deg); }
.sb.left::after { transform: translateX(1px) rotate(-45deg); }
.sb.right::after { transform: translateX(-2px) rotate(135deg); }
.sthumb { display: block; flex: none; background: repeating-linear-gradient(90deg, #c8d6f6 0 2px, #9db1e4 2px 3px); border: 1px solid #dce6fb; border-radius: 2px; }
.sthumb.v { width: 15px; height: 14px; margin-top: 116px; background: repeating-linear-gradient(#c8d6f6 0 2px, #9db1e4 2px 3px); }
.sthumb.h { width: 15px; height: 15px; margin-left: 377px; }
.sthumb.h2 { width: 15px; height: 15px; margin-left: 1px; }

/* layout tabs */
.layoutbar { height: 17px; flex: none; display: flex; align-items: stretch; background: #f0edd9; padding-left: 5px; font: 11px/16px "Liberation Sans", sans-serif; color: #111; }
.navs { display: flex; width: 57px; }
.nv { flex: 1; text-align: center; color: #aaa; font-size: 9px; border-right: 1px solid #f4f2e6; background: #dedcd0; }
.ltab { position: relative; padding: 0 0 0 9px; height: 16px; text-align: left; color: #111; }
.ltab::after { content: ""; position: absolute; right: 3px; top: 0; height: 15px; border-right: 1px solid #555; transform: skewX(-25deg); }
.lcur { width: 60px; background: #fffcf1; padding-left: 13px; }
.l1 { width: 48px; }
.l2 { width: 51px; }
.hscroll { width: 647px; display: flex; align-items: center; padding-left: 3px; padding-right: 5px; background: linear-gradient(#fbfaf3, #fff 40%, #eeece0); }
.corner { width: 15px; background: #f0edd9; }
.splitter2 { height: 5px; flex: none; background: #666; }

/* command */
.command { height: 58px; flex: none; display: flex; background: #fff; font: 13.200px/16px "Liberation Mono", monospace; color: #000; }
.grip { width: 16px; background: #bdbdbd; padding: 2px 2px 0; }
.grip i { display: block; width: 11px; height: 3px; background: repeating-linear-gradient(90deg, #444 0 1px, transparent 1px 2px); }
.cmdmain { flex: 1; display: flex; flex-direction: column; }
.hist { height: 39px; display: flex; border-bottom: 1px solid #aaa; padding-top: 2px; }
.histtext { flex: 1; padding-left: 2px; }
.cmdv { width: 16px; display: flex; flex-direction: column; gap: 6px; }
.prompt { flex: 1; display: flex; align-items: center; padding-left: 2px; }
.prompt > span { flex: 1; padding-top: 2px; }
.cmdh { width: 83px; display: flex; align-items: center; padding-right: 20px; background: #f3f3f0; }

/* status */
.status { height: 22px; flex: none; display: flex; border-top: 1px solid #111; background: linear-gradient(#a8a8a8, #6e6e6e); font-size: 11px; color: #222; }
.coords { width: 236px; padding-left: 12px; font: 10.900px/21px "Liberation Sans", sans-serif; color: #111; white-space: nowrap; }
.sgroup { display: flex; }
.sbtn { width: 22px; height: 21px; display: flex; align-items: center; justify-content: center; flex: none; background: linear-gradient(#c8c8c8, #a6a6a6); border-left: 1px solid #6b6b6b; white-space: nowrap; }
.sbtn svg { width: 16px; height: 16px; }
.sbtn.on { background: linear-gradient(#c3e0ea, #8fbdcc); }
.model { width: 53px; font-size: 11.500px; }
.w22 { width: 22px; }
.gap12 { width: 12px; flex: none; }
.gap15 { width: 15px; flex: none; }
.gap8 { width: 7px; flex: none; }
.scale { width: 50px; gap: 3px; }
.scale .mini, .work2d .mini { margin-left: 2px; border-top-color: #111; }
.work2d { width: 168px; gap: 2px; padding: 0 2px; justify-content: flex-start; font-size: 10.800px; }
.trayic { width: 32px; }
.trayic svg { width: 24px; height: 20px; }
.w12 { width: 12px; }
.w12 .mini { margin: 0; border-left-width: 3px; border-right-width: 3px; border-top-color: #111; }
.lastbtn { width: 23px; }

/* taskbar */
.taskbar { height: 30px; flex: none; display: flex; align-items: center; background: linear-gradient(#3a7cf0 0, #245edb 12%, #2660de 85%, #1941a5); color: #fff; font: 11.300px/16px "Liberation Sans", sans-serif; }
.start { width: 87px; height: 30px; display: flex; align-items: center; padding-left: 9px; background: linear-gradient(#4da74d, #3c8f3c 20%, #3a8a3a 80%, #2d6e2d); border-radius: 0 12px 12px 0; font: italic bold 19px "Liberation Sans", sans-serif; text-shadow: 1px 1px 1px #1a3a1a; }
.start svg { width: 16px; height: 16px; margin-right: -1px; }
.tasks { display: flex; gap: 2px; margin-left: 10px; padding-bottom: 1px; }
.task { width: 158px; height: 24px; display: flex; align-items: center; gap: 4px; padding-left: 8px; background: linear-gradient(#4586ee, #3b78e6); border-radius: 2px; white-space: nowrap; overflow: hidden; }
.task svg { width: 16px; height: 16px; }
.task.cur { background: #1c4eb5; }
.lang { width: 14px; margin-right: 3px; font-size: 11px; }
.chev { width: 18px; height: 18px; border-radius: 50%; background: #4aa0ee; border: 1px solid #bcdcf8; position: relative; flex: none; margin-right: -7px; z-index: 2; }
.chev::after { content: ""; position: absolute; left: 6px; top: 4px; width: 6px; height: 6px; border: solid #fff; border-width: 2px 0 0 2px; transform: rotate(-45deg); }
.tray { width: 75px; height: 30px; display: flex; align-items: center; gap: 7px; padding-left: 12px; background: linear-gradient(#2d9ae8, #1287dd 20%, #1282d8 85%, #0f6fc4); }
.tray svg { width: 14px; height: 17px; }
```
